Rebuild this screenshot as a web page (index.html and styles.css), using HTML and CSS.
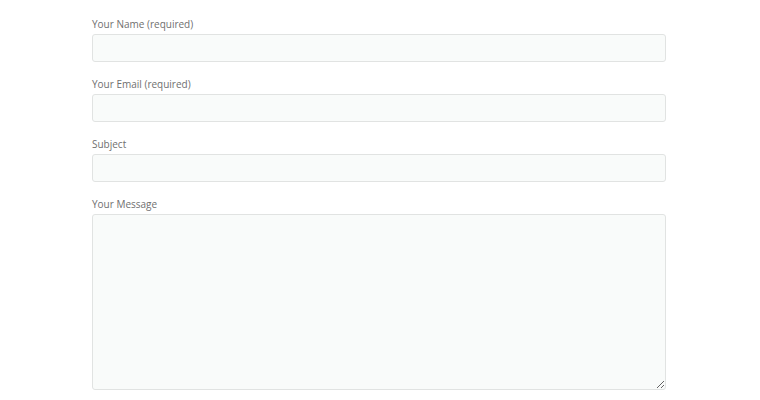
FILE: index.html
```html
<!DOCTYPE html>
<html lang="en">
<head>
  <meta charset="UTF-8">
  <meta name="viewport" content="width=device-width, initial-scale=1.0">
  <title>Contact</title>
  <link rel="stylesheet" href="styles.css">
</head>
<body>
  <form class="contact-form">
    <div class="form-group">
      <label for="yourName">Your Name (required)</label>
      <input type="text" id="yourName">
    </div>

    <div class="form-group">
      <label for="yourEmail">Your Email (required)</label>
      <input type="email" id="yourEmail">
    </div>

    <div class="form-group">
      <label for="subject">Subject</label>
      <input type="text" id="subject">
    </div>

    <div class="form-group">
      <label for="yourMessage">Your Message</label>
      <textarea id="yourMessage"></textarea>
    </div>
  </form>
</body>
</html>
```

FILE: styles.css
```css
body {
  font-family: 'Open Sans', 'Liberation Sans', sans-serif;
  margin: 0;
  background: #fff;
  color: #6f6f6f;
}
.contact-form {
  width: 574px;
  margin-left: 92px;
  padding-top: 17px;
}
.form-group {
  margin-bottom: 15px;
}
label {
  display: block;
  font-size: 10px;
  line-height: 15px;
  margin-bottom: 2px;
}
input[type="text"],
input[type="email"],
textarea {
  display: block;
  box-sizing: border-box;
  width: 100%;
  height: 28px;
  margin: 0;
  padding: 4px 6px;
  border: 1px solid #e1e3e2;
  border-radius: 3px;
  background-color: #f9fbfa;
  font-family: inherit;
  font-size: 12px;
  color: #555;
}
textarea {
  height: 176px;
  resize: vertical;
}
```
